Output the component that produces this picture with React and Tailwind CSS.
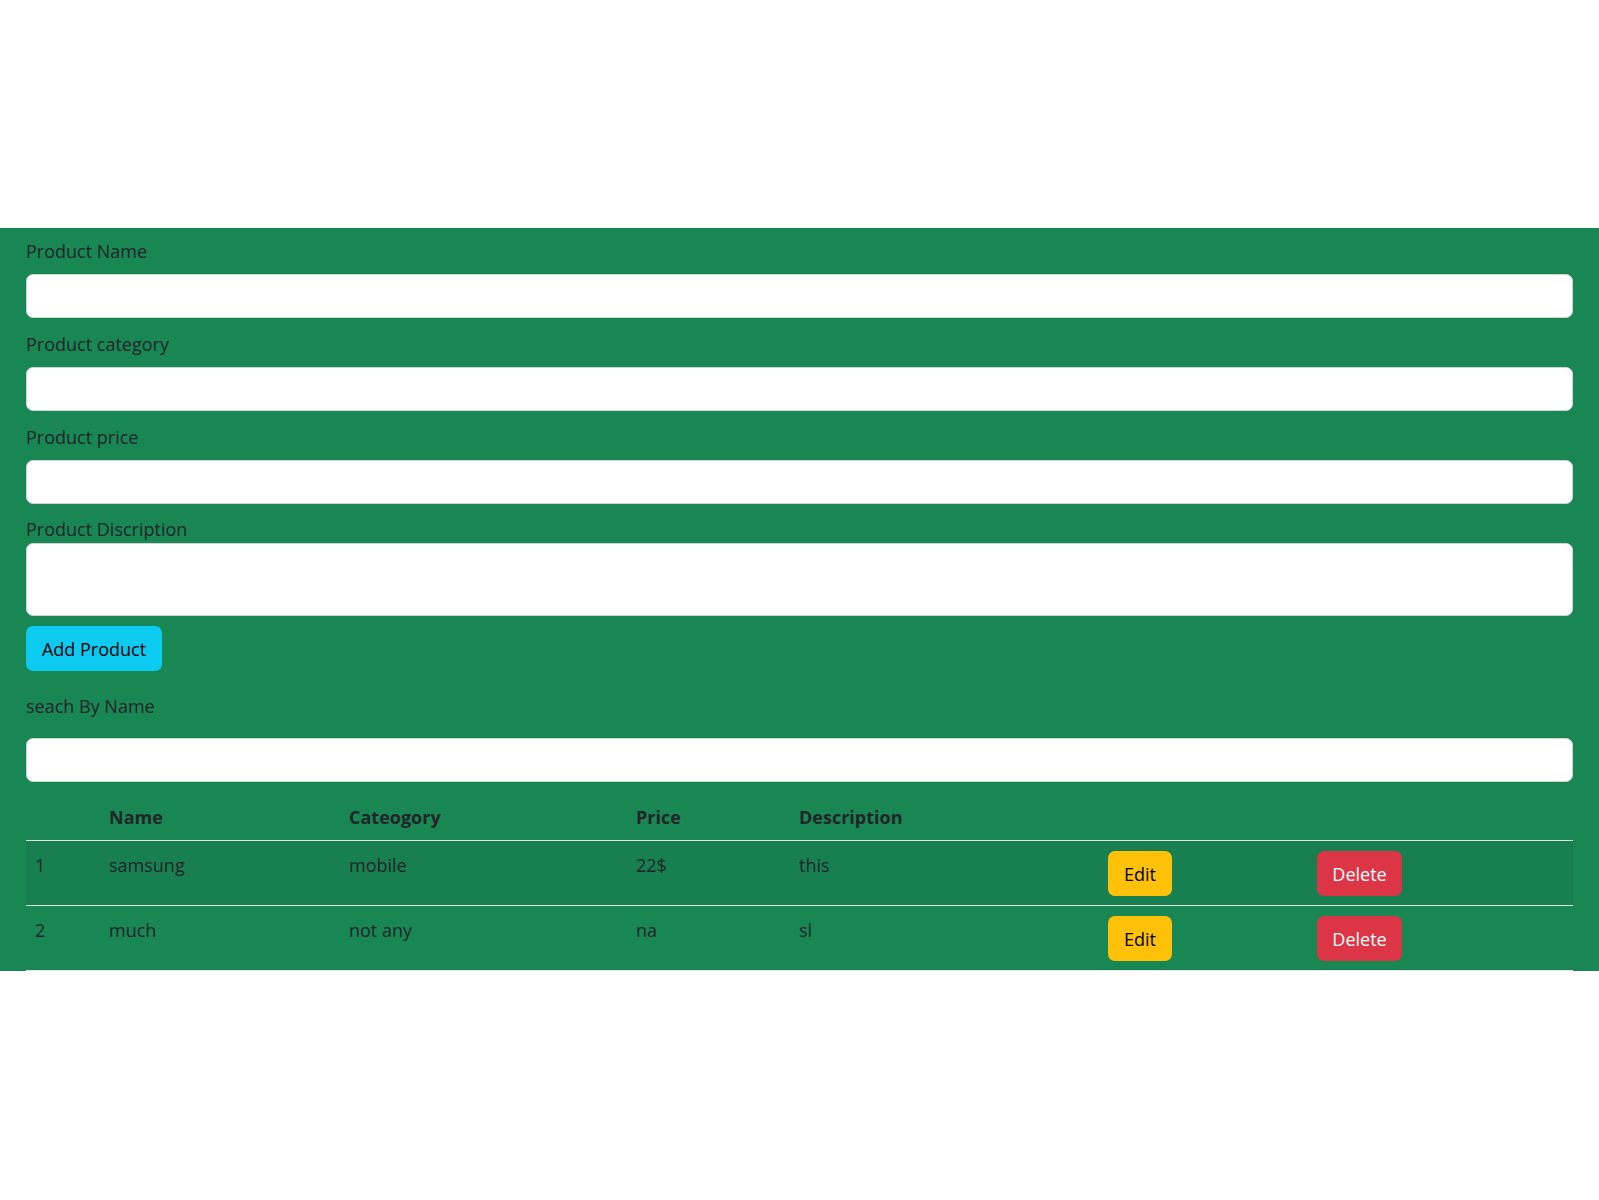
import React from 'react';

const products = [
  { id: 1, name: 'samsung', category: 'mobile', price: '22$', description: 'this' },
  { id: 2, name: 'much', category: 'not any', price: 'na', description: 'sl' },
];

const Field = ({ label }) => (
  <div className="mb-[12px]">
    <label className="block mb-[9px]">{label}</label>
    <input type="text" className="block w-full h-[44px] bg-white border border-[#ced4da] rounded-[7px] px-[14px] outline-none" />
  </div>
);

export default function App() {
  return (
    <div className="pt-[228px] bg-white text-[#212529] text-[18px] leading-[28px]" style={{ fontFamily: '"Open Sans", "Noto Sans", sans-serif' }}>
      <div className="bg-[#198754] px-[26px] pt-[9px]">
        <Field label="Product Name" />
        <Field label="Product category" />
        <div className="mb-[11px]">
          <label className="block mb-[9px]">Product price</label>
          <input type="text" className="block w-full h-[44px] bg-white border border-[#ced4da] rounded-[7px] px-[14px] outline-none" />
        </div>
        <div>
          <label className="block">Product Discription</label>
          <textarea rows={2} className="block w-full h-[73px] bg-white border border-[#ced4da] rounded-[7px] px-[14px] py-[7px] outline-none resize-none" />
        </div>
        <button className="mt-[10px] w-[136px] h-[45px] rounded-[7px] bg-[#0dcaf0] text-black">Add Product</button>

        <div className="mt-[21px]">seach By Name</div>
        <input type="text" className="mt-[18px] block w-full h-[44px] bg-white border border-[#ced4da] rounded-[7px] px-[14px] outline-none" />

        <table className="mt-[12px] w-full table-fixed border-collapse">
          <colgroup>
            <col className="w-[74px]" />
            <col className="w-[240px]" />
            <col className="w-[287px]" />
            <col className="w-[163px]" />
            <col className="w-[309px]" />
            <col className="w-[209px]" />
            <col />
          </colgroup>
          <thead>
            <tr className="border-b border-[#dee2e6] text-left">
              <th className="p-[9px] font-bold"></th>
              <th className="p-[9px] font-bold">Name</th>
              <th className="p-[9px] font-bold">Cateogory</th>
              <th className="p-[9px] font-bold">Price</th>
              <th className="p-[9px] font-bold">Description</th>
              <th className="p-[9px]"></th>
              <th className="p-[9px]"></th>
            </tr>
          </thead>
          <tbody>
            {products.map((p, i) => (
              <tr key={p.id} className={'border-b border-[#dee2e6] ' + (i % 2 === 0 ? 'bg-[#188050]' : '')}>
                <td className="px-[9px] pt-[10px] pb-[9px] align-top">{p.id}</td>
                <td className="px-[9px] pt-[10px] pb-[9px] align-top">{p.name}</td>
                <td className="px-[9px] pt-[10px] pb-[9px] align-top">{p.category}</td>
                <td className="px-[9px] pt-[10px] pb-[9px] align-top">{p.price}</td>
                <td className="px-[9px] pt-[10px] pb-[9px] align-top">{p.description}</td>
                <td className="px-[9px] pt-[10px] pb-[9px] align-top">
                  <button className="block w-[64px] h-[45px] rounded-[7px] bg-[#ffc107] text-black">Edit</button>
                </td>
                <td className="px-[9px] pt-[10px] pb-[9px] align-top">
                  <button className="block w-[85px] h-[45px] rounded-[7px] bg-[#dc3545] text-white">Delete</button>
                </td>
              </tr>
            ))}
          </tbody>
        </table>
      </div>
    </div>
  );
}
